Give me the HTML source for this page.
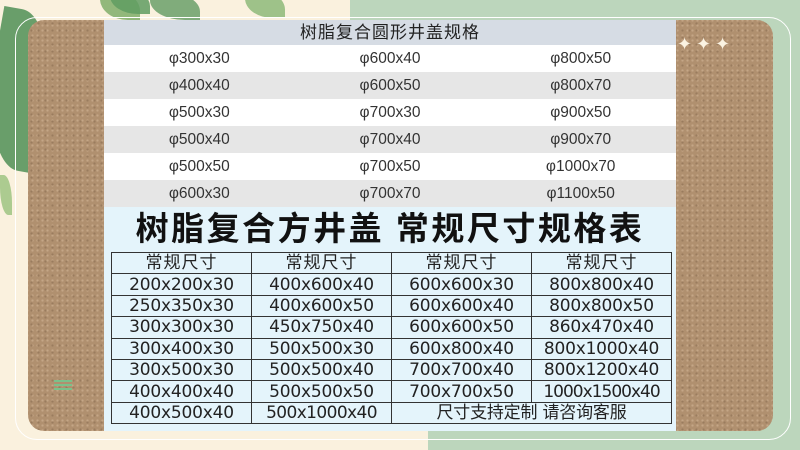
<!DOCTYPE html>
<html><head><meta charset="utf-8"><style>
*{margin:0;padding:0;box-sizing:border-box}
body{width:800px;height:450px;overflow:hidden;position:relative;background:#faf1de;font-family:"Liberation Sans","Noto Sans CJK SC",sans-serif}
.g1{position:absolute;left:350px;top:0;width:450px;height:330px;background:#bcd6bc}
.g2{position:absolute;left:428px;top:300px;width:372px;height:150px;background:#bcd6bc}
.frame{position:absolute;left:15px;top:17px;width:776px;height:423px;border:1.5px solid #fff;border-radius:22px}
.cork{position:absolute;left:28px;top:20px;width:745px;height:411px;border-radius:16px;background:#b0906f;background-image:radial-gradient(#9a7c5e 1px,transparent 1.3px),radial-gradient(#c4a686 1px,transparent 1.3px);background-size:7px 7px,5px 5px;background-position:0 0,2px 3px}
.img{position:absolute;left:104px;top:20px;width:572px;height:411px;background:#e4f4fb}
.hdr{height:25px;background:#d6dce4;text-align:center;font-size:17px;line-height:25px;color:#222;letter-spacing:1px}
.r{height:27px;display:flex;font-size:15.5px;line-height:27px;color:#333}
.r div{flex:1;text-align:center}
.r.w{background:#fff}.r.g{background:#e6e6e6}
.title{text-align:center;font-size:33px;font-weight:bold;color:#111;height:45px;line-height:44px;letter-spacing:2.5px}
table{position:absolute;left:7px;top:232px;border-collapse:collapse;width:561px}
td{border:1.5px solid #333;height:21.4px;text-align:center;font-family:"DejaVu Sans","Noto Sans CJK SC",sans-serif;font-size:17px;color:#222;width:140px;padding:0;line-height:18px;letter-spacing:-.2px}
.star{position:absolute;top:34px;color:#fbf3e2;font-size:18px}
.leaf{position:absolute;background:#5d9a5e;border-radius:0 70% 0 70%;opacity:.85}
</style></head><body>
<div class="g1"></div><div class="g2"></div>
<div class="leaf" style="left:-10px;top:10px;width:60px;height:160px;transform:rotate(10deg);background:#4f8f56"></div>
<div class="leaf" style="left:100px;top:-10px;width:40px;height:30px;background:#7fae6a"></div>
<div class="leaf" style="left:150px;top:-8px;width:50px;height:28px;background:#6aa06a"></div>
<div class="leaf" style="left:245px;top:-10px;width:40px;height:28px;background:#8dba7a"></div>
<div class="leaf" style="left:110px;top:-12px;width:40px;height:26px;background:#5f9c62"></div>
<div class="leaf" style="left:0;top:175px;width:12px;height:40px;background:#9ec483"></div>
<div class="frame"></div>
<div class="cork"></div>
<div class="star" style="left:677px">✦</div><div class="star" style="left:696px">✦</div><div class="star" style="left:715px">✦</div>
<div style="position:absolute;left:54px;top:380px;width:18px;height:2px;background:#7cc08a;box-shadow:0 4px 0 #7cc08a,0 8px 0 #7cc08a"></div>
<div class="img">
<div class="hdr">树脂复合圆形井盖规格</div>
<div class="r w"><div>φ300x30</div><div>φ600x40</div><div>φ800x50</div></div>
<div class="r g"><div>φ400x40</div><div>φ600x50</div><div>φ800x70</div></div>
<div class="r w"><div>φ500x30</div><div>φ700x30</div><div>φ900x50</div></div>
<div class="r g"><div>φ500x40</div><div>φ700x40</div><div>φ900x70</div></div>
<div class="r w"><div>φ500x50</div><div>φ700x50</div><div>φ1000x70</div></div>
<div class="r g"><div>φ600x30</div><div>φ700x70</div><div>φ1100x50</div></div>
<div class="title">树脂复合方井盖 常规尺寸规格表</div>
<table>
<tr><td style="letter-spacing:1px">常规尺寸</td><td style="letter-spacing:1px">常规尺寸</td><td style="letter-spacing:1px">常规尺寸</td><td style="letter-spacing:1px">常规尺寸</td></tr>
<tr><td>200x200x30</td><td>400x600x40</td><td>600x600x30</td><td>800x800x40</td></tr>
<tr><td>250x350x30</td><td>400x600x50</td><td>600x600x40</td><td>800x800x50</td></tr>
<tr><td>300x300x30</td><td>450x750x40</td><td>600x600x50</td><td>860x470x40</td></tr>
<tr><td>300x400x30</td><td>500x500x30</td><td>600x800x40</td><td>800x1000x40</td></tr>
<tr><td>300x500x30</td><td>500x500x40</td><td>700x700x40</td><td>800x1200x40</td></tr>
<tr><td>400x400x40</td><td>500x500x50</td><td>700x700x50</td><td style="letter-spacing:-1px">1000x1500x40</td></tr>
<tr><td>400x500x40</td><td style="letter-spacing:-.6px">500x1000x40</td><td colspan="2">尺寸支持定制 请咨询客服</td></tr>
</table>
</div>
</body></html>
